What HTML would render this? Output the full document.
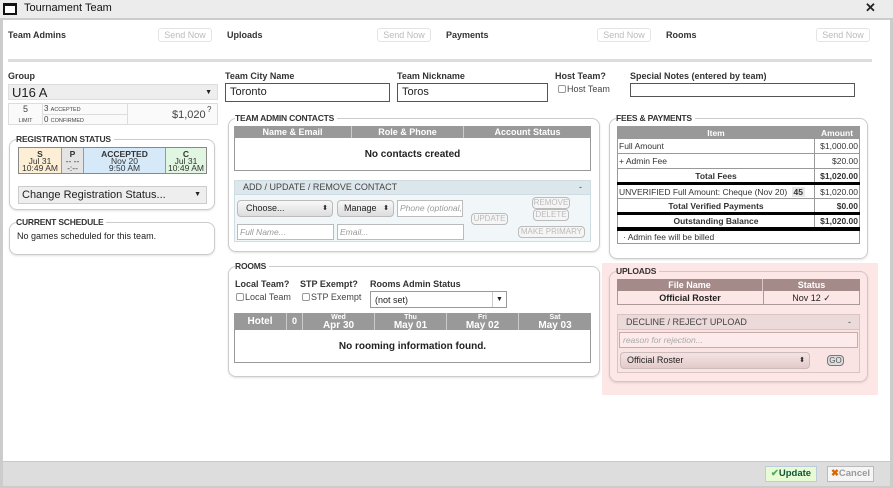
<!DOCTYPE html>
<html><head><meta charset="utf-8"><style>
*{box-sizing:border-box;margin:0;padding:0}
body{width:893px;height:488px;position:relative;overflow:hidden;background:#fff;font-family:"Liberation Sans",Arial,sans-serif;font-size:9px;color:#222}
.a{position:absolute}
.b{font-weight:bold}
.lbl{position:absolute;font-weight:bold;font-size:9px;color:#333}
.sn{position:absolute;width:54px;height:14px;border:1px solid #e4e4e4;border-radius:3px;color:#bbb;font-size:9px;text-align:center;line-height:12px}
.inp{position:absolute;border:1px solid #555;background:#fff;font-size:11px;padding-left:4px;line-height:16px}
.fs{position:absolute;border:1px solid #ccc;border-radius:8px;box-shadow:0 1px 2px rgba(0,0,0,.12)}
.leg{position:absolute;top:-6px;left:6px;background:#fff;font-weight:bold;font-size:8.5px;color:#333;padding-right:3px;letter-spacing:-.2px}
.th{background:#999;color:#fff;font-weight:bold;text-align:center}
.gb{position:absolute;border:1px solid #bbb;border-radius:4px;color:#bbb;font-size:8px;text-align:center;line-height:10px;background:#f5f5f5}
.sel{position:absolute;background:linear-gradient(#f8f8f8,#ddd);border:1px solid #bbb;border-radius:4px;font-size:9px;padding-left:8px;line-height:15px}
.ph{position:absolute;border:1px solid #bbb;background:#fff;color:#999;font-style:italic;font-size:8.5px;padding-left:2px;line-height:14px}
table{border-collapse:collapse}
.ft td{height:15px;padding:0 1px}
</style></head><body>
<div class="a" style="left:0;top:0;width:893px;height:18px;background:#ececec"></div>
<div class="a" style="left:3px;top:3px;width:14px;height:12px;border:2px solid #111;border-top-width:3px;background:#fff"></div>
<div class="a" style="left:24px;top:2px;font-size:11px;color:#111">Tournament Team</div>
<div class="a" style="left:865px;top:0px;font-size:13px;font-weight:bold">✕</div>
<div class="a" style="left:0;top:18px;width:893px;height:470px;border:3px solid #ccc;border-top-width:2px"></div>
<div class="a" style="left:3px;top:461px;width:887px;height:25px;background:#ddd;border-top:1px solid #c8c8c8"></div>
<div class="lbl" style="left:8px;top:30px">Team Admins</div>
<div class="sn" style="left:158px;top:28px">Send Now</div>
<div class="lbl" style="left:227px;top:30px">Uploads</div>
<div class="sn" style="left:377px;top:28px">Send Now</div>
<div class="lbl" style="left:446px;top:30px">Payments</div>
<div class="sn" style="left:597px;top:28px">Send Now</div>
<div class="lbl" style="left:666px;top:30px">Rooms</div>
<div class="sn" style="left:816px;top:28px">Send Now</div>
<div class="a" style="left:8px;top:59px;width:864px;height:3px;background:#ddd"></div>
<div class="lbl" style="left:8px;top:71px">Group</div>
<div class="a" style="left:8px;top:84px;width:210px;height:16px;background:#eee;border:1px solid #ddd;font-size:13px;padding-left:3px;line-height:15px">U16 A<span style="position:absolute;right:5px;font-size:7px">▼</span></div>
<div class="a" style="left:8px;top:103px;width:210px;height:22px;border:1px solid #ddd;background:#fafafa"></div>
<div class="a" style="left:9px;top:104px;width:33px;text-align:center;font-size:9px;line-height:10px;color:#444">5<br><span style="font-size:5.5px">LIMIT</span></div>
<div class="a" style="left:42px;top:103px;width:86px;height:22px;border-left:1px solid #ddd;border-right:1px solid #ddd"></div>
<div class="a" style="left:42px;top:114px;width:86px;border-top:1px solid #ddd"></div>
<div class="a" style="left:44px;top:104px;font-size:8px;color:#444">3 <span style="font-size:5.5px">ACCEPTED</span></div>
<div class="a" style="left:44px;top:115px;font-size:8px;color:#444">0 <span style="font-size:5.5px">CONFIRMED</span></div>
<div class="a" style="left:172px;top:109px;font-size:11px;color:#444">$1,020</div>
<div class="a" style="left:207px;top:105px;font-size:8px;color:#444">?</div>
<div class="fs" style="left:9px;top:139px;width:206px;height:71px"><div class="leg">REGISTRATION STATUS</div></div>
<div class="a" style="left:18px;top:147px;width:189px;height:27px;border:1px solid #888;display:flex;font-size:8.5px;line-height:7px;text-align:center;color:#333">
<div style="width:43px;background:#fcefd6;border-right:1px solid #999;padding-top:3px"><b>S</b><br>Jul 31<br>10:49 AM</div>
<div style="width:22px;background:#e4e4e4;border-right:1px solid #999;padding-top:3px"><b>P</b><br>-- --<br>-:--</div>
<div style="width:82px;background:#d6e9f8;border-right:1px solid #999;padding-top:3px"><b>ACCEPTED</b><br>Nov 20<br>9:50 AM</div>
<div style="flex:1;background:#e0f6e0;padding-top:3px"><b>C</b><br>Jul 31<br>10:49 AM</div></div>
<div class="a" style="left:18px;top:186px;width:189px;height:18px;background:#eee;border:1px solid #ccc;font-size:11px;padding-left:3px;line-height:16px">Change Registration Status...<span style="position:absolute;right:5px;font-size:7px">▼</span></div>
<div class="fs" style="left:9px;top:222px;width:206px;height:33px"><div class="leg">CURRENT SCHEDULE</div></div>
<div class="a" style="left:17px;top:231px;font-size:9px">No games scheduled for this team.</div>
<div class="lbl" style="left:225px;top:71px">Team City Name</div>
<div class="inp" style="left:225px;top:83px;width:165px;height:19px">Toronto</div>
<div class="lbl" style="left:397px;top:71px">Team Nickname</div>
<div class="inp" style="left:397px;top:83px;width:151px;height:19px">Toros</div>
<div class="lbl" style="left:555px;top:71px">Host Team?</div>
<div class="a" style="left:558px;top:85px;width:8px;height:8px;border:1px solid #999;border-radius:2px"></div>
<div class="a" style="left:567px;top:84px;font-size:9px;color:#444">Host Team</div>
<div class="lbl" style="left:630px;top:71px">Special Notes (entered by team)</div>
<div class="a" style="left:630px;top:83px;width:225px;height:14px;border:1px solid #555"></div>
<div class="fs" style="left:228px;top:118px;width:372px;height:134px"><div class="leg">TEAM ADMIN CONTACTS</div></div>
<div class="a" style="left:234px;top:126px;width:357px;height:45px;border:1px solid #999"></div>
<div class="a th" style="left:234px;top:126px;width:357px;height:12px;display:flex;font-size:9px;line-height:12px">
<div style="width:118px;border-right:1px solid #ccc">Name &amp; Email</div><div style="width:112px;border-right:1px solid #ccc">Role &amp; Phone</div><div style="flex:1">Account Status</div></div>
<div class="a b" style="left:234px;top:149px;width:357px;text-align:center;font-size:10px">No contacts created</div>
<div class="a" style="left:234px;top:180px;width:357px;height:62px;background:#f1f6f8;border:1px solid #cfdde3"></div>
<div class="a" style="left:234px;top:180px;width:357px;height:15px;background:#dce7ec;border:1px solid #cfdde3;font-size:9px;color:#444;padding-left:8px;line-height:13px">ADD / UPDATE / REMOVE CONTACT<span style="position:absolute;right:8px">-</span></div>
<div class="sel" style="left:237px;top:200px;width:96px;height:17px">Choose...<span style="position:absolute;right:4px;font-size:7px">⬍</span></div>
<div class="sel" style="left:337px;top:200px;width:57px;height:17px;padding-left:6px">Manage<span style="position:absolute;right:4px;font-size:7px">⬍</span></div>
<div class="ph" style="left:397px;top:200px;width:66px;height:17px;line-height:15px;overflow:hidden;white-space:nowrap">Phone (optional,</div>
<div class="ph" style="left:237px;top:224px;width:97px;height:16px">Full Name...</div>
<div class="ph" style="left:337px;top:224px;width:127px;height:16px">Email...</div>
<div class="gb" style="left:471px;top:213px;width:37px;height:12px">UPDATE</div>
<div class="gb" style="left:532px;top:197px;width:38px;height:12px">REMOVE</div>
<div class="gb" style="left:533px;top:209px;width:36px;height:12px">DELETE</div>
<div class="gb" style="left:518px;top:226px;width:67px;height:12px">MAKE PRIMARY</div>
<div class="fs" style="left:228px;top:266px;width:372px;height:111px"><div class="leg">ROOMS</div></div>
<div class="lbl" style="left:235px;top:279px">Local Team?</div>
<div class="lbl" style="left:300px;top:279px">STP Exempt?</div>
<div class="lbl" style="left:370px;top:279px">Rooms Admin Status</div>
<div class="a" style="left:236px;top:293px;width:8px;height:8px;border:1px solid #999;border-radius:2px"></div>
<div class="a" style="left:245px;top:292px;font-size:9px;color:#444">Local Team</div>
<div class="a" style="left:302px;top:293px;width:8px;height:8px;border:1px solid #999;border-radius:2px"></div>
<div class="a" style="left:311px;top:292px;font-size:9px;color:#444">STP Exempt</div>
<div class="a" style="left:370px;top:291px;width:137px;height:17px;border:1px solid #999;font-size:9px;padding-left:4px;line-height:16px">(not set)<span style="position:absolute;right:0;top:0;width:14px;height:15px;border-left:1px solid #ccc;text-align:center;font-size:7px">▼</span></div>
<div class="a" style="left:234px;top:313px;width:357px;height:50px;border:1px solid #999"></div>
<div class="a th" style="left:234px;top:313px;width:357px;height:17px;display:flex;font-size:10px">
<div style="width:53px;border-right:1px solid #ccc;line-height:17px">Hotel</div><div style="width:16px;border-right:1px solid #ccc;line-height:17px;font-size:9px">0</div>
<div style="width:72px;border-right:1px solid #ccc"><div style="font-size:7px;line-height:7px;padding-top:1px">Wed</div><div style="line-height:9px">Apr 30</div></div>
<div style="width:72px;border-right:1px solid #ccc"><div style="font-size:7px;line-height:7px;padding-top:1px">Thu</div><div style="line-height:9px">May 01</div></div>
<div style="width:72px;border-right:1px solid #ccc"><div style="font-size:7px;line-height:7px;padding-top:1px">Fri</div><div style="line-height:9px">May 02</div></div>
<div style="flex:1"><div style="font-size:7px;line-height:7px;padding-top:1px">Sat</div><div style="line-height:9px">May 03</div></div></div>
<div class="a b" style="left:234px;top:341px;width:357px;text-align:center;font-size:10px">No rooming information found.</div>
<div class="fs" style="left:609px;top:118px;width:259px;height:141px"><div class="leg">FEES &amp; PAYMENTS</div></div>
<table class="a ft" style="left:617px;top:126px;width:243px;font-size:8.5px;color:#333;white-space:nowrap">
<tr class="th"><td style="border:1px solid #999;height:12px">Item</td><td style="width:45px;border:1px solid #999;border-left:1px solid #ccc;height:12px">Amount</td></tr>
<tr><td style="border:1px solid #999">Full Amount</td><td style="border:1px solid #999;text-align:right">$1,000.00</td></tr>
<tr><td style="border:1px solid #999">+ Admin Fee</td><td style="border:1px solid #999;text-align:right">$20.00</td></tr>
<tr class="b"><td style="border:1px solid #999;border-bottom:3px solid #000;text-align:center">Total Fees</td><td style="border:1px solid #999;border-bottom:3px solid #000;text-align:right">$1,020.00</td></tr>
<tr><td style="border:1px solid #999">UNVERIFIED Full Amount: Cheque (Nov 20) <span style="background:#e8e8e8;font-weight:bold;padding:0 2px;margin-left:2px">45</span></td><td style="border:1px solid #999;text-align:right">$1,020.00</td></tr>
<tr class="b"><td style="border:1px solid #999;border-bottom:3px solid #000;text-align:center">Total Verified Payments</td><td style="border:1px solid #999;border-bottom:3px solid #000;text-align:right">$0.00</td></tr>
<tr class="b"><td style="border:1px solid #999;border-bottom:4px solid #000;text-align:center">Outstanding Balance</td><td style="border:1px solid #999;border-bottom:4px solid #000;text-align:right">$1,020.00</td></tr>
<tr><td colspan="2" style="border:1px solid #999;padding-left:5px;font-size:8.5px">· Admin fee will be billed</td></tr>
</table>
<div class="a" style="left:602px;top:263px;width:276px;height:132px;background:#fde6e6"></div>
<div class="fs" style="left:609px;top:271px;width:259px;height:111px;border-color:#d8c4c4"><div class="leg" style="background:#fde6e6">UPLOADS</div></div>
<div class="a" style="left:617px;top:279px;width:243px;height:26px;border:1px solid #a99"></div>
<div class="a" style="left:617px;top:279px;width:243px;height:12px;background:#a58a8a;color:#fff;font-weight:bold;display:flex;line-height:12px;text-align:center;font-size:9px"><div style="width:146px;border-right:1px solid #d8c4c4">File Name</div><div style="flex:1">Status</div></div>
<div class="a b" style="left:617px;top:293px;width:146px;text-align:center;font-size:9px">Official Roster</div>
<div class="a" style="left:763px;top:291px;width:1px;height:14px;background:#a99"></div>
<div class="a" style="left:763px;top:293px;width:97px;text-align:center;font-size:9px">Nov 12 ✓</div>
<div class="a" style="left:617px;top:314px;width:243px;height:16px;background:#ecd9d9;border:1px solid #d8c4c4;font-size:9px;color:#444;padding-left:8px;line-height:14px">DECLINE / REJECT UPLOAD<span style="position:absolute;right:8px">-</span></div>
<div class="a" style="left:617px;top:330px;width:243px;height:43px;background:#f9e3e3;border:1px solid #d8c4c4;border-top:none"></div>
<div class="a" style="left:619px;top:332px;width:239px;height:16px;border:1px solid #caa;background:#fdeaea;color:#aaa;font-style:italic;font-size:8.5px;padding-left:3px;line-height:14px">reason for rejection...</div>
<div class="a" style="left:620px;top:352px;width:190px;height:17px;background:linear-gradient(#f5e3e3,#e3caca);border:1px solid #cbb;border-radius:4px;font-size:9px;padding-left:6px;line-height:15px">Official Roster<span style="position:absolute;right:4px;font-size:7px">⬍</span></div>
<div class="gb" style="left:827px;top:355px;width:17px;height:11px;color:#555;border-color:#777;background:#ddd">GO</div>
<div class="a b" style="left:765px;top:466px;width:52px;height:16px;background:#e6fbd6;border:1px solid #bcd;color:#153;font-size:9.5px;line-height:14px;text-align:center"><span style="color:#5a5">✔</span>Update</div>
<div class="a b" style="left:827px;top:466px;width:47px;height:16px;background:#f5f5f5;border:1px solid #bbb;color:#999;font-size:9.5px;line-height:14px;text-align:center"><span style="color:#d60">✖</span>Cancel</div>
</body></html>
